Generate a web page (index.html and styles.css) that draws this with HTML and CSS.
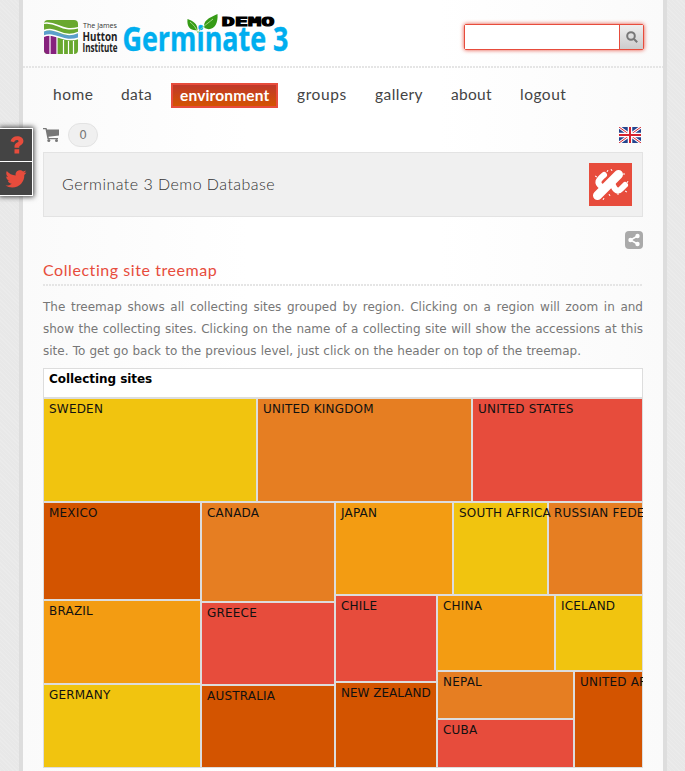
FILE: index.html
```html
<!DOCTYPE html>
<html lang="en">
<head>
<meta charset="utf-8">
<title>Germinate 3 Demo Database</title>
<link rel="stylesheet" href="styles.css">
</head>
<body>
<aside class="social">
  <a><svg width="14" height="18" viewBox="0 0 14 18"><path class="red" d="M.5 5.200C1.500 2 4 .3 7.200.3c3.600 0 6.200 2 6.200 4.800 0 2.200-1.200 3.300-2.700 4.200-1.100.7-1.500 1.100-1.500 1.700v.8H4.500v-1.200c0-2 .9-3 2.600-4C8.100 6 8.500 5.800 8.500 5.200c0-.8-.6-1.200-1.600-1.200-1.300 0-2 .7-2.900 2.200zM4.500 13.200h4.700v4.400H4.500z"/></svg></a>
  <a><svg width="22" height="18" viewBox="0 0 22 18"><path class="red" d="M21.500 2.600c-.6 1-1.300 1.700-2.200 2.300.2 6.500-4.500 12.500-12 12.500-2.500 0-4.800-.7-6.800-1.900 2.300.2 4.500-.4 6.300-1.800-1.900-.1-3.500-1.300-4-3h1.900C2.500 10.200 1.200 8.500 1.200 6.400c.6.3 1.200.5 1.900.5C1.200 5.400.7 3 1.800.9c2.200 2.700 5.300 4.300 8.900 4.500C10.100 2.500 12.200.3 14.900.3c1.200 0 2.400.5 3.200 1.300 1-.2 1.900-.5 2.700-1-.3 1-1 1.900-1.900 2.400.9-.1 1.800-.3 2.600-.4z"/></svg></a>
</aside>
<div class="page">
  <header class="top">
    <svg class="logo" width="246" height="44" viewBox="0 0 246 44">
      <defs><clipPath id="tile"><rect x="1" y="6" width="34" height="34" rx="4"/></clipPath></defs>
      <g clip-path="url(#tile)">
        <rect class="green" y="6" width="36" height="35"/>
        <path class="purple" d="M1 20h13v21H1z"/>
        <path class="blue" d="M0 17.500C14 12 19 27 36 18.500v5C20 31 13 18 0 22z"/>
        <path class="wave" d="M0 9.500C14 6 18 19 36 13.500M0 17C14 11 19 26 36 18M0 22.500C13 17 20 30 36 24"/>
        <path class="bars" d="M7 21v20M14 23v18M20.500 26v15M25.500 27v14M30.500 27v14"/>
      </g>
      <text class="small" x="40" y="14" textLength="34" lengthAdjust="spacingAndGlyphs">The James</text>
      <text class="hutton" x="39.500" y="26.500" textLength="35" lengthAdjust="spacingAndGlyphs">Hutton</text>
      <text class="hutton" x="39.500" y="38" textLength="35" lengthAdjust="spacingAndGlyphs">Institute</text>
      <text class="brand" x="79.500" y="37" textLength="166" lengthAdjust="spacingAndGlyphs">Germinate 3</text>
      <path class="bud" d="M142 13h11l-2 4-3 1-4-1z"/>
      <path class="leaf" d="M144.500 5c5 2 10 4 10 11-6 1-11-2-10-11zM174.500 0c-9 4-15 7-13 14 8 4 14-3 13-14z"/>
      <path class="stem" d="M147 8c4 3 6 6 8 11 2-5 8-8 15-14"/>
      <text class="demo" x="178.500" y="12.300" textLength="53" lengthAdjust="spacingAndGlyphs">DEMO</text>
    </svg>
    <div class="search"><input type="text" aria-label="Search"><button aria-label="Search"><svg width="12" height="12" viewBox="0 0 12 12"><circle cx="5" cy="5" r="3.800"/><path d="M8 8l3.200 3.200"/></svg></button></div>
  </header>
  <nav class="menu">
    <a class="home">home</a><a class="data">data</a><a class="environment">environment</a><a class="groups">groups</a><a class="gallery">gallery</a><a class="about">about</a><a class="logout">logout</a>
  </nav>
  <main>
    <div class="tools">
      <svg width="16" height="14" viewBox="0 0 16 14"><path class="cart" d="M0 0h3.500l.6 1.500H16v6L5.500 8.800l.3 1.200H15v1.300H4.500L2.500 1.300H0z"/><circle class="cart" cx="5.800" cy="12.400" r="1.500"/><circle class="cart" cx="13.500" cy="12.400" r="1.500"/></svg>
      <span class="count">0</span>
      <svg class="flag" width="22" height="16" viewBox="0 0 22 16"><path fill="#24458f" d="M0 0h22v16H0z"/><path stroke="#fff" stroke-width="3" d="M0 0l22 16M22 0L0 16"/><path stroke="#d5232e" stroke-width="1" d="M0 0l22 16M22 0L0 16"/><path stroke="#fff" stroke-width="4.500" d="M11 0v16M0 8h22"/><path stroke="#d5232e" stroke-width="2" d="M11 0v16M0 8h22"/></svg>
    </div>
    <section class="banner">
      <span>Germinate 3 Demo Database</span>
      <svg width="43" height="43" viewBox="0 0 43 43"><path class="red" d="M0 0h43v43H0z"/><path class="cactus thick" d="M8.500 32.500L29.500 11.500"/><path class="cactus" d="M13 24C7 20 9 17 15 12M23 20c3 8 6 9 9 6l4-4"/><path class="spines" d="M14 37l1-2M20 31l1 2M29 30v2M38 20l1-2M34 11h2M23 8l-1-2M18 9l1-2M8 14l-2-1M36 28l2 1"/></svg>
    </section>
    <div class="share"><svg width="18" height="18" viewBox="0 0 18 18"><rect width="18" height="18" rx="4"/><path d="M12.500 5L5.500 9l7 4"/><circle cx="12.500" cy="5" r="2.200"/><circle cx="5.500" cy="9" r="2.200"/><circle cx="12.500" cy="13" r="2.200"/></svg></div>
    <h1>Collecting site treemap</h1>
    <div class="intro">
      <p>The treemap shows all collecting sites grouped by region. Clicking on a region will zoom in and</p>
      <p>show the collecting sites. Clicking on the name of a collecting site will show the accessions at this</p>
      <p class="last">site. To get go back to the previous level, just click on the header on top of the treemap.</p>
    </div>
    <div class="treemap">
      <div class="title">Collecting sites</div>
      <div class="row first">
        <div class="yellow sweden">SWEDEN</div><div class="orange uk">UNITED KINGDOM</div><div class="coral rest">UNITED STATES</div>
      </div>
      <div class="row rest">
        <div class="col americas">
          <div class="rust mexico">MEXICO</div><div class="amber rest">BRAZIL</div><div class="yellow rest">GERMANY</div>
        </div>
        <div class="col mid">
          <div class="orange canada">CANADA</div><div class="coral rest">GREECE</div><div class="rust rest">AUSTRALIA</div>
        </div>
        <div class="col rest">
          <div class="row upper">
            <div class="amber japan">JAPAN</div><div class="yellow rest over">SOUTH AFRICA</div><div class="orange rest">RUSSIAN FEDERATION</div>
          </div>
          <div class="row rest">
            <div class="col pacific"><div class="coral chile">CHILE</div><div class="rust rest">NEW ZEALAND</div></div>
            <div class="col rest">
              <div class="row east"><div class="amber china">CHINA</div><div class="yellow rest">ICELAND</div></div>
              <div class="row rest">
                <div class="col south"><div class="orange nepal">NEPAL</div><div class="coral rest">CUBA</div></div>
                <div class="rust rest">UNITED ARAB EMIRATES</div>
              </div>
            </div>
          </div>
        </div>
      </div>
    </div>
  </main>
</div>
</body>
</html>
```
FILE: styles.css
```css
* { box-sizing: border-box; }
body {
  margin: 0;
  height: 771px;
  overflow: hidden;
  font: 12px/22px "DejaVu Sans", sans-serif;
  color: #777;
  background: repeating-linear-gradient(45deg, rgba(255,255,255,.15) 0 1px, transparent 1px 3px), #e8e8e8;
}
svg { display: block; flex: none; }
.page {
  width: 648px;
  height: 771px;
  margin-left: 19px;
  border: solid #ddd;
  border-width: 0 4px;
  background: linear-gradient(90deg, #fafafa, #fff 35%, #fff 65%, #fafafa);
}
.top { height: 68px; padding: 14px 19px 0 20px; display: flex; justify-content: space-between; background: repeating-linear-gradient(90deg, #e5e5e5 0 2px, transparent 2px 3px) bottom / 100% 2px no-repeat; }
.logo text { font-family: "Open Sans", sans-serif; }
.logo .small { font-size: 7.5px; fill: #333; }
.logo .hutton { font-size: 11.5px; font-weight: 700; fill: #222; }
.logo .brand { font-size: 34.5px; font-weight: 700; fill: #00aeef; stroke: #00aeef; stroke-width: .4px; }
.logo .demo { font: 900 13px "DejaVu Sans Mono", monospace; fill: #000; stroke: #000; stroke-width: 1px; }
.green { fill: #69a82f; }
.purple { fill: #86217d; }
.blue { fill: #5b9fcb; }
.wave { fill: none; stroke: #fff; stroke-width: 1.5; }
.bars { stroke: #fff; stroke-width: 1.2; }
.bud { fill: #fdfdfd; }
.leaf { fill: #369b16; }
.stem { fill: none; stroke: #a3d985; stroke-width: 1; }
.search { width: 180px; height: 26px; margin-top: 10px; display: flex; border: 1px solid #e74c3c; border-radius: 2px; box-shadow: 0 0 4px #e74c3c; }
.search input { width: 154px; border: 0; padding: 0; background: #fff; }
.search button { flex: 1; padding: 0; border: 0; border-left: 1px solid #e74c3c; background: linear-gradient(#eee, #ccc); display: flex; align-items: center; justify-content: center; }
.search svg { fill: none; stroke: #777; stroke-width: 2; }
.menu { display: flex; padding: 15px 0 0 20px; height: 55px; font: 15.5px/23px Lato, sans-serif; color: #444; }
.menu a { height: 25px; white-space: nowrap; padding-left: 10px; }
.home { width: 68px; letter-spacing: .5px; }
.data { width: 60px; letter-spacing: .4px; }
.menu .environment { width: 107px; padding-left: 7px; line-height: 20px; border: 2px solid #e74c3c; background: linear-gradient(#c0392b, #d35400); color: #fff; font-weight: 700; letter-spacing: .15px; }
.groups { width: 78px; margin-left: 9px; letter-spacing: .6px; }
.gallery { width: 76px; letter-spacing: .45px; }
.about { width: 69px; letter-spacing: .3px; }
.logout { letter-spacing: .5px; }
main { padding: 0 20px; }
.tools { height: 24px; display: flex; align-items: center; }
.cart { fill: #777; }
.count { width: 30px; height: 24px; margin-left: 9px; border: 1px solid #e3e3e3; border-radius: 12px; background: #f0f0f0; text-align: center; }
.flag { margin-left: auto; margin-right: 2px; }
.banner { height: 65px; margin-top: 5px; padding: 0 10px 0 18px; display: flex; align-items: center; justify-content: space-between; border: 1px solid #e3e3e3; background: #f0f0f0; color: #333; font: 300 16px/22px Lato, sans-serif; letter-spacing: .47px; }
.banner span { padding-bottom: 2px; }
.red { fill: #e74c3c; }
.cactus { fill: none; stroke: #fff; stroke-width: 6; stroke-linecap: round; stroke-linejoin: round; }
.cactus.thick { stroke-width: 9; }
.spines { stroke: #fff; stroke-width: 1; }
.share { height: 18px; margin-top: 14px; display: flex; justify-content: flex-end; }
.share rect { fill: #aaa; }
.share path { fill: none; stroke: #fff; stroke-width: 1.5; }
.share circle { fill: #fff; }
h1 { height: 32px; margin: 5px 0 10px; padding-top: 5px; background: repeating-linear-gradient(90deg, #e5e5e5 0 2px, transparent 2px 3px) bottom / 100% 2px no-repeat; color: #e74c3c; font: 400 16px/22px Lato, sans-serif; letter-spacing: .56px; }
.intro { height: 72px; }
.intro p { margin: 0; text-align: justify; text-align-last: justify; white-space: nowrap; }
.intro .last { width: 538px; }
.treemap { height: 400px; padding: 1px; display: flex; flex-direction: column; background: #ddd; overflow: hidden; color: #111; line-height: 21px; white-space: nowrap; letter-spacing: .2px; }
.title { height: 28px; margin-bottom: 2px; padding-left: 5px; flex: none; background: #fff; color: #000; font-weight: 700; line-height: 20px; letter-spacing: -.05px; }
.row, .col { display: flex; gap: 2px; min-width: 0; min-height: 0; }
.col { flex-direction: column; }
.first { height: 102px; margin-bottom: 2px; flex: none; }
.rest { flex: 1 1 0; min-width: 0; min-height: 0; }
.sweden { width: 212px; }
.uk { width: 213px; }
.americas { width: 156px; }
.mid { width: 132px; }
.mexico { height: 96px; }
.canada { height: 98px; }
.upper { height: 91px; }
.japan, .china { width: 116px; }
.pacific { width: 100px; }
.pacific .rest { letter-spacing: 0; }
.chile { height: 85px; }
.east { height: 74px; }
.south { width: 135px; }
.nepal { height: 46px; }
.over { position: relative; z-index: 1; }
.yellow, .orange, .coral, .rust, .amber { padding-left: 5px; }
.yellow { background: #f1c40f; }
.orange { background: #e67e22; }
.coral { background: #e74c3c; }
.rust { background: #d35400; }
.amber { background: #f39c12; }
.social { position: absolute; left: 0; top: 128px; width: 33px; height: 68px; border: 1px solid #fff; border-left: 0; box-shadow: 0 0 5px 1px #444; }
.social a { height: 33px; display: flex; align-items: center; justify-content: center; background: #444; }
.social a:first-child { border-bottom: 1px solid #fff; padding-left: 2px; }
```
